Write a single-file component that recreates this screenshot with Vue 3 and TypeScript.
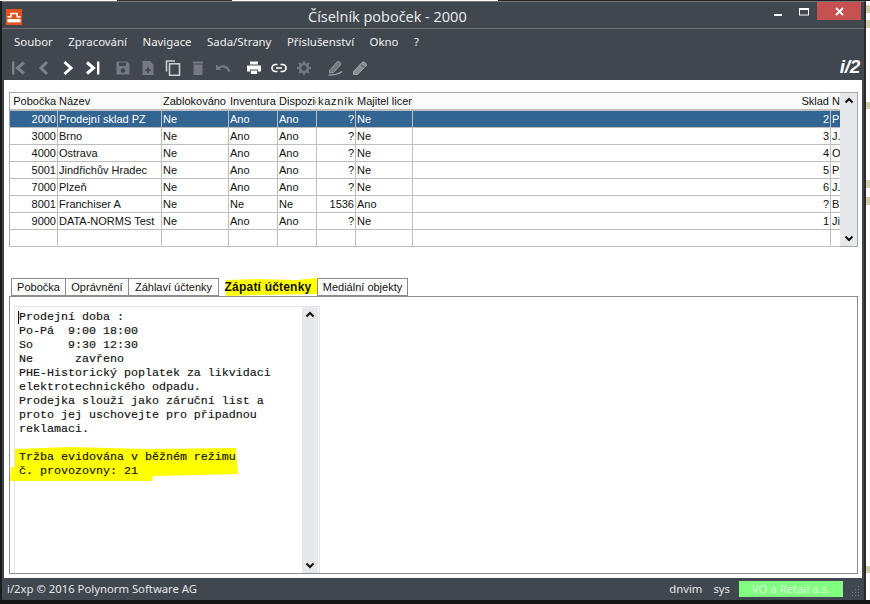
<script setup lang="ts">
const menu = ['Soubor', 'Zpracování', 'Navigace', 'Sada/Strany', 'Příslušenství', 'Okno', '?']

interface Row {
  id: string; name: string; blocked: string; inv: string; disp: string
  cust: string; owner: string; store: string; last: string
}
const rows: Row[] = [
  { id: '2000', name: 'Prodejní sklad PZ', blocked: 'Ne', inv: 'Ano', disp: 'Ano', cust: '?', owner: 'Ne', store: '2', last: 'P' },
  { id: '3000', name: 'Brno', blocked: 'Ne', inv: 'Ano', disp: 'Ano', cust: '?', owner: 'Ne', store: '3', last: 'J.' },
  { id: '4000', name: 'Ostrava', blocked: 'Ne', inv: 'Ano', disp: 'Ano', cust: '?', owner: 'Ne', store: '4', last: 'O' },
  { id: '5001', name: 'Jindřichův Hradec', blocked: 'Ne', inv: 'Ano', disp: 'Ano', cust: '?', owner: 'Ne', store: '5', last: 'P' },
  { id: '7000', name: 'Plzeň', blocked: 'Ne', inv: 'Ano', disp: 'Ano', cust: '?', owner: 'Ne', store: '6', last: 'J.' },
  { id: '8001', name: 'Franchiser A', blocked: 'Ne', inv: 'Ne', disp: 'Ne', cust: '1536', owner: 'Ano', store: '?', last: 'B' },
  { id: '9000', name: 'DATA-NORMS Test', blocked: 'Ne', inv: 'Ano', disp: 'Ano', cust: '?', owner: 'Ne', store: '1', last: 'Ji' },
  { id: '', name: '', blocked: '', inv: '', disp: '', cust: '', owner: '', store: '', last: '' },
]
const tabs = ['Pobočka', 'Oprávnění', 'Záhlaví účtenky', 'Zápatí účtenky', 'Mediální objekty']
const memo = `Prodejní doba :
Po-Pá  9:00 18:00
So     9:30 12:30
Ne      zavřeno
PHE-Historický poplatek za likvidaci
elektrotechnického odpadu.
Prodejka slouží jako záruční list a
proto jej uschovejte pro připadnou
reklamaci.

Tržba evidována v běžném režimu
č. provozovny: 21`
</script>

<template>
  <div class="screen">
    <div class="noise"></div>
    <div class="main">
      <div class="window">
        <header class="titlebar">
          <svg class="logo" width="16" height="16" viewBox="0 0 16 16">
            <rect width="16" height="16" fill="#e2521d" />
            <path d="M5 7V4.500h6V7" fill="none" stroke="#fff" stroke-width="1.600" />
            <rect x="1.500" y="7" width="4" height="1.600" fill="#fff" />
            <rect x="10.500" y="7" width="4" height="1.600" fill="#fff" />
            <rect x="1.500" y="10" width="13" height="3.400" fill="#fff" />
          </svg>
          <span class="title">Číselník poboček - 2000</span>
          <div class="winbtns">
            <svg class="wmin" width="8" height="2"><rect width="8" height="2" fill="#fff" /></svg>
            <svg class="wmax" width="10" height="8"><rect x="0.500" y="0.500" width="9" height="6.500" fill="none" stroke="#fff" /><rect width="10" height="2" fill="#fff" /></svg>
            <div class="wclose">
              <svg width="9" height="9" viewBox="0 0 9 9"><path d="M1 1l7 7M8 1l-7 7" stroke="#fff" stroke-width="1.800" /></svg>
            </div>
          </div>
        </header>

        <nav class="menu">
          <span v-for="m in menu" :key="m">{{ m }}</span>
        </nav>

        <div class="toolbar">
          <div class="tools">
            <span class="tool"><svg width="16" height="16" viewBox="0 0 16 16"><rect x="2" y="1.500" width="2.400" height="13" fill="#7d8187" /><path d="M14 2.500L7.500 8l6.500 5.500" fill="none" stroke="#7d8187" stroke-width="3" /></svg></span>
            <span class="tool"><svg width="16" height="16" viewBox="0 0 16 16"><path d="M12 2L6 8l6 6" fill="none" stroke="#7d8187" stroke-width="3" /></svg></span>
            <span class="tool"><svg width="16" height="16" viewBox="0 0 16 16"><path d="M4.500 2l6.500 6-6.500 6" fill="none" stroke="#fff" stroke-width="3" /></svg></span>
            <span class="tool gap"><svg width="16" height="16" viewBox="0 0 16 16"><path d="M2 2.500L8.500 8 2 13.500" fill="none" stroke="#fff" stroke-width="3" /><rect x="12" y="1.500" width="2.400" height="13" fill="#fff" /></svg></span>

            <span class="tool"><svg width="16" height="16" viewBox="0 0 16 16"><path d="M1.500 1.500h10.500l2.500 2.500v10.500h-13z" fill="#767a80" /><rect x="4" y="2.500" width="7" height="3.500" fill="#40474f" /><circle cx="8" cy="10.500" r="2.200" fill="#40474f" /></svg></span>
            <span class="tool"><svg width="16" height="16" viewBox="0 0 16 16"><path d="M2.500 1h7.500l3.500 3.500v10.500h-11z" fill="#767a80" /><path d="M8 7.500v5.500M5.300 10.200h5.400" stroke="#40474f" stroke-width="1.800" /></svg></span>
            <span class="tool"><svg width="16" height="16" viewBox="0 0 16 16"><path d="M1.500 11.500V1h8.500" fill="none" stroke="#d0d2d4" stroke-width="1.500" /><rect x="4.500" y="3.800" width="10" height="11.500" fill="none" stroke="#d0d2d4" stroke-width="1.500" /></svg></span>
            <span class="tool"><svg width="16" height="16" viewBox="0 0 16 16"><rect x="3" y="1.500" width="10" height="2" fill="#767a80" /><rect x="3.500" y="4.500" width="9" height="10.500" fill="#767a80" /></svg></span>
            <span class="tool gap2"><svg width="16" height="16" viewBox="0 0 16 16"><path d="M1 4.500v5.500h5.500z" fill="#767a80" /><path d="M3 8.500C6 5 11.500 5.500 14.500 11.500" fill="none" stroke="#767a80" stroke-width="2.200" /></svg></span>

            <span class="tool"><svg width="16" height="16" viewBox="0 0 16 16"><rect x="4" y="1.500" width="8" height="3" fill="#fff" /><path d="M1 5.500h14v6h-3V9.500H4v2H1z" fill="#fff" /><rect x="4.800" y="10.500" width="6.400" height="3.500" fill="#fff" /></svg></span>
            <span class="tool"><svg width="16" height="16" viewBox="0 0 16 16"><path d="M6.500 4.500H4.500a3.500 3.500 0 000 7h2M9.500 4.500h2a3.500 3.500 0 010 7h-2M5 8h6" fill="none" stroke="#fff" stroke-width="1.700" /></svg></span>
            <span class="tool gap2"><svg width="16" height="16" viewBox="0 0 16 16"><circle cx="8" cy="8" r="4" fill="none" stroke="#767a80" stroke-width="2.600" /><path d="M8 1v3M8 12v3M1 8h3M12 8h3M3 3l2.200 2.200M10.800 10.800L13 13M13 3l-2.200 2.200M5.200 10.800L3 13" stroke="#767a80" stroke-width="2" /></svg></span>

            <span class="tool"><svg width="16" height="16" viewBox="0 0 16 16"><path d="M2.500 10.500L10 2c1.500-1.500 5 .8 3.500 3L6.500 12.500 2.500 13z" fill="#777b80" stroke="#a3a6a9" stroke-width="0.800" /><path d="M1.500 15.200C6 15.200 11 14.500 15 11.500" fill="none" stroke="#a3a6a9" stroke-width="1.300" /></svg></span>
            <span class="tool"><svg width="16" height="16" viewBox="0 0 16 16"><path d="M1.500 11.500L10 2.500c1.500-1.500 5.500.8 4 3.500L5.500 14.500h-4z" fill="#8a8e92" stroke="#b0b3b6" stroke-width="0.800" /><path d="M9 5l3.500 2.500" stroke="#40474f" stroke-width="1" /></svg></span>
          </div>
          <span class="brand">i/2</span>
        </div>

        <main class="content">
          <section class="grid">
            <div class="grid-body">
              <div class="row head">
                <div class="cell r">Pobočka</div>
                <div class="cell">Název</div>
                <div class="cell">Zablokováno</div>
                <div class="cell">Inventura</div>
                <div class="cell">Dispozice</div>
                <div class="cell clipl"><span>Zákazník</span></div>
                <div class="cell">Majitel licence</div>
                <div class="cell r">Sklad</div>
                <div class="cell last">N</div>
              </div>
              <div v-for="(r, i) in rows" :key="i" class="row" :class="{ sel: i === 0 }">
                <div class="cell r">{{ r.id }}</div>
                <div class="cell">{{ r.name }}</div>
                <div class="cell">{{ r.blocked }}</div>
                <div class="cell">{{ r.inv }}</div>
                <div class="cell">{{ r.disp }}</div>
                <div class="cell r">{{ r.cust }}</div>
                <div class="cell">{{ r.owner }}</div>
                <div class="cell r">{{ r.store }}</div>
                <div class="cell last">{{ r.last }}</div>
              </div>
            </div>
            <div class="sbar">
              <svg width="10" height="7" viewBox="0 0 10 7"><path d="M1.500 5.500L5 2l3.500 3.500" fill="none" stroke="#111" stroke-width="2" /></svg>
              <svg width="10" height="7" viewBox="0 0 10 7"><path d="M1.500 1.500L5 5l3.500-3.500" fill="none" stroke="#111" stroke-width="2" /></svg>
            </div>
          </section>

          <div class="tabs">
            <div v-for="(t, i) in tabs" :key="t" class="tab" :class="[`t${i}`, { active: i === 3 }]">{{ t }}</div>
            <svg class="mark-tab" width="92" height="19" viewBox="0 0 92 19"><path d="M0 2L30 1 70 2 91 0 91 16 30 17 0 18z" fill="#ffff00" /></svg>
          </div>

          <section class="panel">
            <div class="memo">
              <svg class="mark-memo" width="230" height="36" viewBox="0 0 230 36"><path d="M6 3L60 1 140 3 227 2 229 28 144 30 143 35 1 35 2 22 6 20z" fill="#ffff00" /></svg>
              <pre class="memo-text">{{ memo }}</pre>
              <i class="caret"></i>
              <div class="sbar memo-bar">
                <svg width="10" height="7" viewBox="0 0 10 7"><path d="M1.500 5.500L5 2l3.500 3.500" fill="none" stroke="#111" stroke-width="2" /></svg>
                <svg width="10" height="7" viewBox="0 0 10 7"><path d="M1.500 1.500L5 5l3.500-3.500" fill="none" stroke="#111" stroke-width="2" /></svg>
              </div>
            </div>
          </section>
        </main>

        <footer class="status">
          <span class="copy">i/2xp © 2016 Polynorm Software AG</span>
          <span class="user">dnvim</span>
          <span class="sys">sys</span>
          <span class="company">VO a Retail a.s.</span>
          <svg class="grip" width="10" height="11" viewBox="0 0 10 11">
            <g fill="#7b8087">
              <rect x="8" y="0" width="1" height="1" /><rect x="8" y="3" width="1" height="1" /><rect x="8" y="6" width="1" height="1" /><rect x="8" y="9" width="1" height="1" />
              <rect x="5" y="3" width="1" height="1" /><rect x="5" y="6" width="1" height="1" /><rect x="5" y="9" width="1" height="1" />
              <rect x="2" y="6" width="1" height="1" /><rect x="2" y="9" width="1" height="1" />
            </g>
          </svg>
        </footer>
      </div>
      <aside class="strip">
        <i class="bit b1"></i><i class="bit b2"></i><i class="bit b3"></i><i class="bit b4"></i><i class="bit b5"></i><i class="bit b6"></i>
      </aside>
    </div>
    <div class="foot"></div>
  </div>
</template>

<style>
html, body { margin: 0; background: #222; }
</style>

<style scoped>
.screen {
  width: 870px;
  height: 604px;
  display: flex;
  flex-direction: column;
  overflow: hidden;
  background: #1c1c1c;
  font-family: "Noto Sans", sans-serif;
}
.noise {
  height: 1px;
  flex: none;
  background: linear-gradient(90deg, #fff 0 117px, #333 117px 232px, #fff 232px 498px, #222 498px);
}
.main { flex: none; height: 599px; display: flex; }
.foot { flex: 1; background: #151515; }
.window {
  width: 862px;
  margin-left: 2px;
  border-right: 2px solid #2a2a2a;
  border-top: 1px solid #777;
  background: #40474f;
  display: flex;
  flex-direction: column;
  height: 598px;
}
.strip { flex: 1; background: #fff; position: relative; }
.bit { position: absolute; left: 0; width: 4px; background: #cfd2a8; }
.b1 { top: 4px; height: 8px; }
.b2 { top: 19px; height: 8px; }
.b3 { top: 101px; height: 7px; }
.b4 { top: 179px; height: 8px; }
.b5 { top: 196px; height: 8px; }
.b6 { top: 565px; height: 7px; }

.titlebar {
  height: 26px;
  flex: none;
  border-bottom: 1px solid #6f6f6f;
  display: flex;
  align-items: center;
  position: relative;
  color: #eee;
}
.logo { margin-left: 4px; margin-top: 3px; }
.title {
  position: absolute;
  left: 306px;
  top: 4px;
  font-size: 14.500px;
  line-height: 22px;
  font-family: "Open Sans", sans-serif;
}
.winbtns { margin-left: auto; display: flex; align-items: flex-start; align-self: flex-start; }
.wmin { margin-top: 12px; margin-right: 17px; }
.wmax { margin-top: 6px; margin-right: 8px; }
.wclose {
  width: 44px;
  height: 18px;
  background: #c75050;
  margin-right: 3px;
  display: flex;
  align-items: center;
  justify-content: center;
}

.menu {
  height: 24px;
  padding-bottom: 2px;
  flex: none;
  display: flex;
  align-items: center;
  gap: 15.500px;
  padding-left: 12px;
  font-size: 11.400px;
  color: #f0f0f0;
}
.toolbar {
  height: 25px;
  flex: none;
  display: flex;
  align-items: center;
  justify-content: space-between;
  padding: 0 4px 0 3px;
}
.tools { display: flex; align-items: center; }
.tool { width: 25px; height: 25px; display: flex; align-items: center; justify-content: center; }
.tool.gap { margin-right: 5px; }
.tool.gap2 { margin-right: 6px; }
.brand {
  font: italic 700 19px "Liberation Sans", sans-serif;
  color: #fff;
  letter-spacing: -0.300px;
  margin-top: -2px;
}

.content {
  flex: 1;
  background: #fff;
  padding: 12px 4px 4px 5px;
  margin: 0 2px;
  display: flex;
  flex-direction: column;
  min-height: 0;
  font-family: "Liberation Sans", sans-serif;
  font-size: 11px;
  color: #111;
}
.grid {
  height: 155px;
  flex: none;
  box-sizing: border-box;
  border: 1px solid #a8a8a8;
  display: flex;
}
.grid-body { width: 830px; }
.row {
  display: grid;
  grid-template-columns: 48px 104px 67px 49px 39px 39px 57px 418px 10px;
  height: 17px;
  box-sizing: border-box;
  border-bottom: 1px solid #bdbdbd;
  line-height: 16px;
}
.row.head { height: 18px; border-bottom: 2px solid #bdbdbd; background: #fbfbfb; }
.row.sel { background: #336592; color: #fff; }
.cell {
  box-sizing: border-box;
  border-right: 1px solid #bdbdbd;
  padding: 0 1px;
  overflow: hidden;
  white-space: nowrap;
}
.cell.r { text-align: right; }
.cell.last { border-right: none; }
.head .cell { border-right-color: #eee; }
.clipl { display: flex; justify-content: flex-end; }
.clipl span { flex: none; letter-spacing: 0.700px; }
.sbar {
  width: 17px;
  flex: none;
  background: #e6e8eb;
  display: flex;
  flex-direction: column;
  align-items: center;
  justify-content: space-between;
  padding: 4px 0;
  box-sizing: border-box;
}

.tabs {
  margin-top: 31px;
  margin-left: 2px;
  height: 18px;
  flex: none;
  display: flex;
  position: relative;
}
.tab {
  box-sizing: border-box;
  height: 18px;
  border: 1px solid #8c8c8c;
  border-left: none;
  text-align: center;
  line-height: 16px;
  background: #fff;
  position: relative;
  z-index: 1;
}
.t0 { width: 55px; border-left: 1px solid #8c8c8c; }
.t1 { width: 63px; }
.t2 { width: 90px; }
.t3 { width: 99px; }
.t4 { width: 90px; }
.tab.active {
  height: 19px;
  background: transparent;
  z-index: 2;
  font-weight: 700;
  font-size: 12px;
  letter-spacing: 0.200px;
  border-bottom: none;
  border-top-color: transparent;
}
.mark-tab { position: absolute; left: 215px; top: 0; z-index: 1; }

.panel {
  flex: 1;
  box-sizing: border-box;
  border: 1px solid #8c8c8c;
  padding: 9px 0 0 4px;
  min-height: 0;
}
.memo {
  width: 306px;
  height: 100%;
  box-sizing: border-box;
  border: 1px solid #e2e5e8;
  border-bottom: none;
  position: relative;
  padding: 3px 0 0 4px;
}
.memo-text {
  margin: 0;
  position: relative;
  font-family: "Liberation Mono", monospace;
  font-size: 11.670px;
  line-height: 14px;
  color: #111;
  -webkit-text-stroke: 0.150px #111;
}
.caret { position: absolute; left: 3px; top: 4px; width: 1px; height: 13px; background: #111; }
.memo-bar { position: absolute; right: 1px; top: 0; bottom: 0; width: 16px; }
.mark-memo { position: absolute; left: -6px; top: 139px; }

.status {
  height: 20px;
  padding-bottom: 2px;
  flex: none;
  display: flex;
  align-items: center;
  padding-left: 5px;
  font-size: 11.300px;
  color: #e6e6e6;
  position: relative;
}
.copy { flex: 1; }
.user { margin-right: 11px; }
.sys { margin-right: 9px; }
.company {
  width: 104px;
  height: 16px;
  background: #80ff80;
  color: #dcf5dc;
  text-align: center;
  line-height: 16px;
  margin-right: 7px;
  margin-top: 2px;
}
.grip { margin-right: 4px; margin-top: 6px; }
</style>
